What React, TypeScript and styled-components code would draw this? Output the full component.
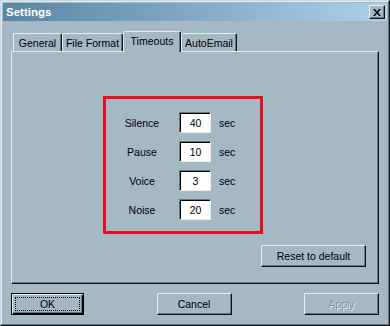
import React from "react"
import styled, { createGlobalStyle } from "styled-components"

const Face = "#a5b9c5"
const Light = "#e4eef3"
const Shadow = "#62788a"
const Dark = "#0e1418"

const GlobalStyle = createGlobalStyle`
  html, body {
    margin: 0;
    padding: 0;
    background: ${Face};
  }
  body {
    font-family: "Liberation Sans", Arial, sans-serif;
    font-size: 10.5px;
    color: #000;
  }
`

type Timeout = { label: string; value: string }

const timeouts: Timeout[] = [
  { label: "Silence", value: "40" },
  { label: "Pause", value: "10" },
  { label: "Voice", value: "3" },
  { label: "Noise", value: "20" },
]

const tabs = [
  { name: "General", width: 49 },
  { name: "File Format", width: 61 },
  { name: "Timeouts", width: 58 },
  { name: "AutoEmail", width: 56 },
]

export default function App() {
  return (
    <>
      <GlobalStyle />
      <S.Window>
        <S.TitleBar>
          <S.Title>Settings</S.Title>
          <S.CloseButton aria-label="Close">
            <svg width="8" height="7" viewBox="0 0 8 7">
              <path d="M0 0h2l2 2.5L6 0h2L5 3.5 8 7H6L4 4.5 2 7H0l3-3.5z" fill="#000" />
            </svg>
          </S.CloseButton>
        </S.TitleBar>

        <S.Body>
          <S.TabStrip>
            {tabs.map((t) => (
              <S.Tab key={t.name} width={t.width} active={t.name === "Timeouts"}>
                {t.name}
              </S.Tab>
            ))}
          </S.TabStrip>

          <S.Panel>
            <S.Highlight>
              <S.Grid>
                {timeouts.map((t) => (
                  <React.Fragment key={t.label}>
                    <S.Label>{t.label}</S.Label>
                    <S.Field defaultValue={t.value} />
                    <S.Unit>sec</S.Unit>
                  </React.Fragment>
                ))}
              </S.Grid>
            </S.Highlight>
            <S.ResetRow>
              <S.Button width={105}>Reset to default</S.Button>
            </S.ResetRow>
          </S.Panel>

          <S.ButtonRow>
            <S.DefaultButton>
              <S.Focus>OK</S.Focus>
            </S.DefaultButton>
            <S.Button width={75}>Cancel</S.Button>
            <S.Button width={75} disabled>
              Apply
            </S.Button>
          </S.ButtonRow>
        </S.Body>
      </S.Window>
    </>
  )
}

const bevel = `
  background: ${Face};
  border-style: solid;
  border-width: 1px;
  border-color: ${Light} ${Dark} ${Dark} ${Light};
  box-shadow: inset -1px -1px 0 ${Shadow};
`

const S = {
  Window: styled.div`
    box-sizing: border-box;
    width: 390px;
    height: 326px;
    padding: 2px;
    background: ${Face};
    border-style: solid;
    border-width: 1px;
    border-color: #c6d8e2 ${Dark} ${Dark} #c6d8e2;
    box-shadow: inset -1px -1px 0 ${Shadow}, inset 1px 1px 0 ${Light};
    display: flex;
    flex-direction: column;
  `,
  TitleBar: styled.div`
    height: 18px;
    display: flex;
    align-items: center;
    justify-content: space-between;
    padding: 0 2px 0 3px;
    background: linear-gradient(90deg, #5a86a4 0%, #7ea6c2 45%, #aed0ea 100%);
  `,
  Title: styled.span`
    color: #fff;
    font-weight: bold;
    font-size: 11.5px;
  `,
  CloseButton: styled.button`
    box-sizing: border-box;
    width: 16px;
    height: 14px;
    padding: 0;
    display: flex;
    align-items: center;
    justify-content: center;
    ${bevel}
  `,
  Body: styled.div`
    flex: 1;
    display: flex;
    flex-direction: column;
    padding: 10px 8px 0;
  `,
  TabStrip: styled.div`
    height: 21px;
    display: flex;
    align-items: flex-end;
    padding-left: 2px;
    margin-bottom: -1px;
    position: relative;
    z-index: 1;
  `,
  Tab: styled.div<{ width: number; active?: boolean }>`
    box-sizing: border-box;
    width: ${({ width }) => width}px;
    height: ${({ active }) => (active ? 21 : 18)}px;
    margin-bottom: ${({ active }) => (active ? 0 : 1)}px;
    padding-top: 3px;
    text-align: center;
    background: ${Face};
    border-style: solid;
    border-width: 1px 1px 0 1px;
    border-color: ${Light} ${Dark} transparent ${Light};
    border-radius: 2px 2px 0 0;
    box-shadow: inset -1px 0 0 ${Shadow};
    white-space: nowrap;
    line-height: 13px;
  `,
  Panel: styled.div`
    box-sizing: border-box;
    height: 233px;
    display: flex;
    flex-direction: column;
    align-items: flex-start;
    border-style: solid;
    border-width: 1px;
    border-color: ${Light} ${Dark} ${Dark} ${Light};
    box-shadow: inset -1px -1px 0 ${Shadow};
  `,
  Highlight: styled.div`
    box-sizing: border-box;
    width: 160px;
    height: 138px;
    margin: 44px 0 0 91px;
    border: 3px solid #e0121c;
    padding: 13px 0 0 4px;
  `,
  Grid: styled.div`
    display: grid;
    grid-template-columns: 64px 32px auto;
    grid-auto-rows: 21px;
    column-gap: 5px;
    row-gap: 8px;
    align-items: center;
  `,
  Label: styled.span`
    text-align: center;
  `,
  Field: styled.input`
    box-sizing: border-box;
    width: 32px;
    height: 21px;
    margin: 0;
    padding: 0 0 0 1px;
    font: inherit;
    text-align: center;
    background: #fff;
    border-style: solid;
    border-width: 1px;
    border-color: ${Shadow} ${Light} ${Light} ${Shadow};
    box-shadow: inset 1px 1px 0 #000;
    outline: none;
  `,
  Unit: styled.span`
    padding-left: 3px;
  `,
  ResetRow: styled.div`
    align-self: stretch;
    display: flex;
    justify-content: flex-end;
    margin: 11px 12px 0 0;
  `,
  Button: styled.button<{ width: number }>`
    box-sizing: border-box;
    width: ${({ width }) => width}px;
    height: 22px;
    padding: 0;
    font: inherit;
    color: #000;
    ${bevel}
    &:disabled {
      color: #7f919d;
      text-shadow: 1px 1px 0 ${Light};
    }
  `,
  DefaultButton: styled.button`
    box-sizing: border-box;
    width: 73px;
    height: 22px;
    padding: 3px;
    font: inherit;
    color: #000;
    background: ${Face};
    border: 1px solid #000;
    box-shadow: inset 1px 1px 0 ${Light}, inset -1px -1px 0 #000, inset -2px -2px 0 ${Shadow};
  `,
  Focus: styled.span`
    display: flex;
    align-items: center;
    justify-content: center;
    height: 100%;
    box-sizing: border-box;
    border: 1px dotted #000;
  `,
  ButtonRow: styled.div`
    display: flex;
    justify-content: space-between;
    margin-top: 9px;
  `,
}
